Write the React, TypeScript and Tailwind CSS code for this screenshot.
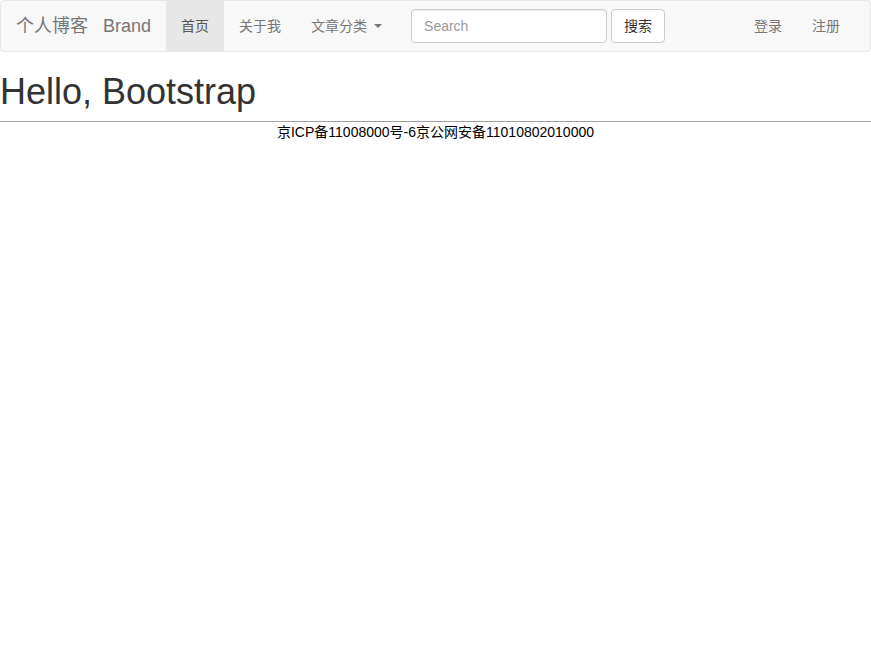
import React from "react";

const font = { fontFamily: '"Liberation Sans", "Noto Sans CJK SC", sans-serif' };

const NavLink = ({ label, active }: { label: string; active?: boolean }) => (
  <a
    href="#"
    className={
      active
        ? "block px-[15px] leading-[50px] text-[14px] text-[#555] bg-[#e7e7e7]"
        : "block px-[15px] leading-[50px] text-[14px] text-[#777]"
    }
  >
    {label}
  </a>
);

export default function App() {
  return (
    <div className="min-h-[665px] bg-white text-[#333]" style={font}>
      <nav className="flex items-stretch h-[52px] bg-[#f8f8f8] border border-[#e7e7e7] rounded-[4px] mb-[20px]">
        <a href="#" className="flex items-center px-[15px] text-[18px] text-[#777] leading-[50px]">
          <span>个人博客</span>
          <span className="ml-[15px]">Brand</span>
        </a>
        <ul className="flex">
          <li>
            <NavLink label="首页" active />
          </li>
          <li>
            <NavLink label="关于我" />
          </li>
          <li>
            <a href="#" className="flex items-center px-[15px] leading-[50px] text-[14px] text-[#777]">
              文章分类
              <span className="ml-[7px] w-0 h-0 border-x-[4px] border-x-transparent border-t-[4px] border-t-[#777]" />
            </a>
          </li>
        </ul>
        <form className="flex items-start gap-[4px] pl-[14px] pr-[15px] pt-[8px]" onSubmit={(e) => e.preventDefault()}>
          <input
            type="text"
            placeholder="Search"
            className="w-[196px] h-[34px] px-[12px] text-[14px] text-[#555] bg-white border border-[#ccc] rounded-[4px] placeholder:text-[#999] shadow-[inset_0_1px_1px_rgba(0,0,0,0.075)]"
          />
          <button
            type="submit"
            className="w-[54px] h-[34px] text-[14px] text-[#333] bg-white border border-[#ccc] rounded-[4px]"
          >
            搜索
          </button>
        </form>
        <ul className="flex ml-auto mr-[15px]">
          <li>
            <NavLink label="登录" />
          </li>
          <li>
            <NavLink label="注册" />
          </li>
        </ul>
      </nav>
      <h1 className="text-[36px] leading-[39.6px] font-normal text-[#333] mb-[9px]">Hello, Bootstrap</h1>
      <div className="border-t border-[#a0a0a0]" />
      <footer className="text-center text-[14px] leading-[20px] text-black">
        京ICP备11008000号-6京公网安备11010802010000
      </footer>
    </div>
  );
}
